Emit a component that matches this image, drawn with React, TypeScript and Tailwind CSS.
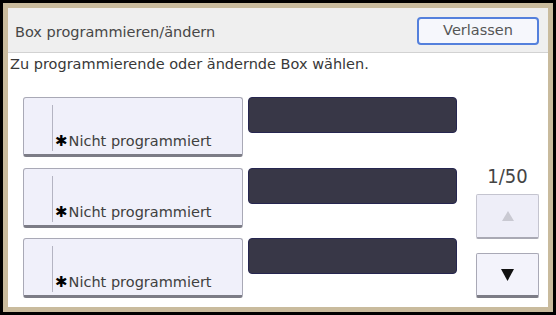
import React from 'react'

const font = { fontFamily: '"DejaVu Sans", "Liberation Sans", sans-serif' }

function BoxRow() {
  return (
    <div className="flex items-start gap-[5px]">
      <button className="relative h-[60px] w-[220px] rounded-[3px] border border-[#a9a9b6] border-b-[3px] border-b-[#7c7c86] bg-[#f0f0fa] text-left">
        <span className="absolute left-[28px] top-[7px] h-[46px] w-px bg-[#b4b4c2]" />
        <span className="absolute left-[31px] top-[35px] flex items-center text-[14.5px] leading-[17px] text-[#404040]">
          <span className="mr-[1px] text-[15px] font-bold text-black">✱</span>
          Nicht programmiert
        </span>
      </button>
      <div className="h-[36px] w-[209px] rounded-[4px] border border-[#262650] bg-[#383747]" />
    </div>
  )
}

export default function App() {
  return (
    <div className="h-[315px] w-[556px] bg-black p-[3px]" style={font}>
      <div className="flex h-full flex-col border-[5px] border-[#c9bb9d] bg-white">
        {/* title bar */}
        <div className="flex h-[45px] items-center justify-between border-b border-[#d2d2d2] bg-[#efefef] pl-[7px] pr-[9px]">
          <span className="mt-[6px] text-[14.5px] text-[#474747]">Box programmieren/ändern</span>
          <button className="mt-[1px] h-[28px] w-[122px] rounded-[4px] border-2 border-[#5480dc] bg-[#f6f7fc] text-[14.5px] text-[#555]">
            Verlassen
          </button>
        </div>

        <p className="mt-[3px] pl-[2px] text-[14.5px] leading-[17px] text-[#383838]">
          Zu programmierende oder ändernde Box wählen.
        </p>

        <div className="mt-[24px] flex flex-1 pb-[9px] pl-[15px] pr-[9px]">
          <div className="flex flex-col gap-[10.5px]">
            <BoxRow />
            <BoxRow />
            <BoxRow />
          </div>

          <div className="ml-auto flex flex-col items-center self-end">
            <span
              className="text-[20px] leading-[22px] text-[#444]"
              style={{ fontFamily: '"DejaVu Sans Condensed", "Liberation Sans Narrow", sans-serif' }}
            >
              1/50
            </span>
            <button className="mt-[7px] flex h-[45px] w-[63px] items-center justify-center rounded-[2px] border border-[#c4c4cf] border-b-2 border-b-[#a9a9b4] bg-[#eeeef8]">
              <svg width="12" height="10" viewBox="0 0 12 10">
                <path d="M6 0 L12 10 L0 10 Z" fill="#c9c9d2" />
              </svg>
            </button>
            <button className="mt-[14px] flex h-[45px] w-[63px] items-center justify-center rounded-[2px] border border-[#a9a9b6] border-b-[3px] border-b-[#7c7c86] bg-[#f3f3fb]">
              <svg width="13" height="12" viewBox="0 0 13 12">
                <path d="M0 0 L13 0 L6.5 12 Z" fill="#111" />
              </svg>
            </button>
          </div>
        </div>
      </div>
    </div>
  )
}
